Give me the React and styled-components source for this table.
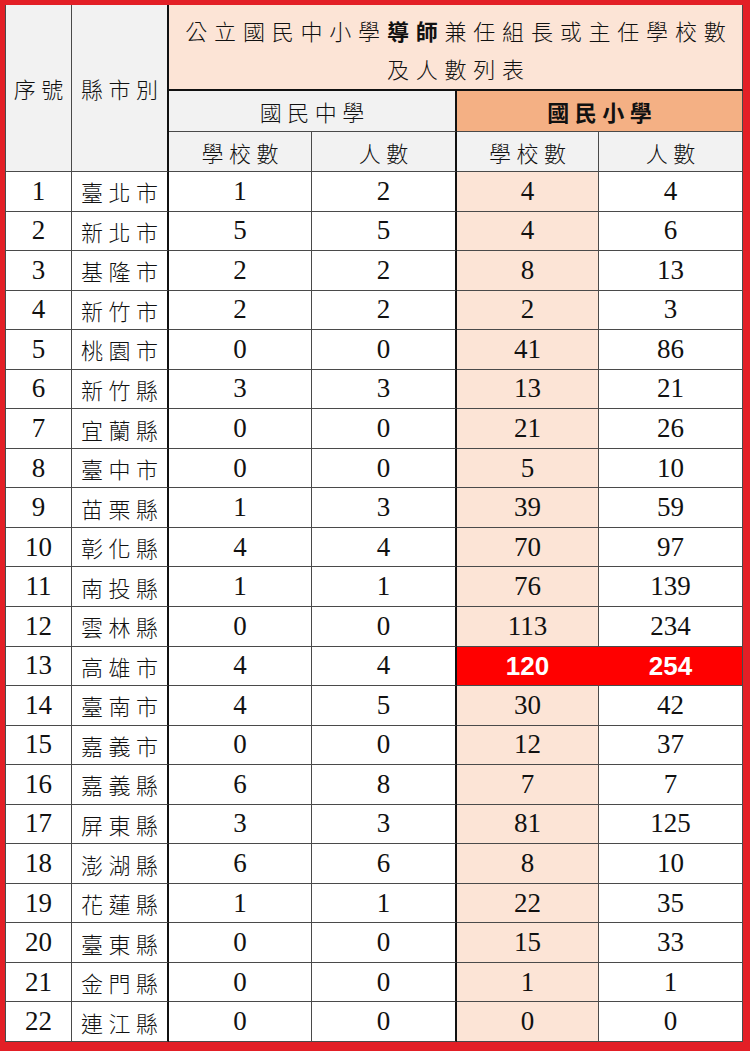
import React from 'react';
import styled, { createGlobalStyle, css } from 'styled-components';

const GlobalStyle = createGlobalStyle`
  html, body {
    margin: 0;
    padding: 0;
    background: #ffffff;
  }
  body {
    font-family: "Liberation Serif", "Noto Sans CJK TC", serif;
  }
`;

const Frame = styled.div`
  width: 750px;
  height: 1051px;
  box-sizing: border-box;
  border-style: solid;
  border-color: #e31f26;
  border-width: 5px 8px 9px 5px;
  background: #ffffff;
`;

const Grid = styled.div`
  display: grid;
  grid-template-columns: 66px 97px 143px 145px 142px 144px;
  grid-template-rows: 86px 41px 40px repeat(22, 1fr);
  height: 100%;
  box-sizing: border-box;
  border-left: 1px solid #4a4a4a;
`;

const Cell = styled.div`
  box-sizing: border-box;
  display: flex;
  align-items: center;
  justify-content: center;
  color: #111;
  background: ${(p) => p.$bg || '#ffffff'};
  border-right: ${(p) => (p.$thickRight ? '2px solid #111' : '1px solid #4a4a4a')};
  border-bottom: ${(p) => (p.$thickBottom ? '2px solid #111' : '1px solid #4a4a4a')};
  ${(p) => p.$col && css`grid-column: ${p.$col};`}
  ${(p) => p.$row && css`grid-row: ${p.$row};`}
`;

const HeadText = styled.span`
  font-family: "Noto Sans CJK TC", sans-serif;
  font-size: 22px;
  letter-spacing: 5.5px;
  padding-left: 5.5px;
  font-weight: ${(p) => (p.$bold ? 700 : 300)};
  line-height: 1;
`;

const Title = styled.div`
  font-family: "Noto Sans CJK TC", sans-serif;
  font-size: 22px;
  font-weight: 300;
  letter-spacing: 6.8px;
  padding-left: 6.8px;
  line-height: 38px;
  text-align: center;
  padding-top: 4px;

  b {
    font-weight: 700;
  }
`;

const Num = styled.span`
  font-family: "Liberation Serif", serif;
  font-size: 27px;
  line-height: 1;
`;

const City = styled.span`
  font-family: "Noto Sans CJK TC", sans-serif;
  font-size: 22px;
  font-weight: 300;
  letter-spacing: 5.5px;
  padding-left: 5.5px;
  line-height: 1;
`;

const HotCell = styled(Cell)`
  background: #ff0000;
  border-right-color: ${(p) => (p.$last ? '#4a4a4a' : '#ff0000')};
`;

const HotNum = styled.span`
  font-family: "Liberation Sans", Arial, sans-serif;
  font-weight: 700;
  font-size: 26px;
  color: #ffffff;
  line-height: 1;
`;

const GRAY = '#f2f2f2';
const PEACH = '#fce4d6';
const ORANGE = '#f4b084';

const rows = [
  ['臺北市', 1, 2, 4, 4],
  ['新北市', 5, 5, 4, 6],
  ['基隆市', 2, 2, 8, 13],
  ['新竹市', 2, 2, 2, 3],
  ['桃園市', 0, 0, 41, 86],
  ['新竹縣', 3, 3, 13, 21],
  ['宜蘭縣', 0, 0, 21, 26],
  ['臺中市', 0, 0, 5, 10],
  ['苗栗縣', 1, 3, 39, 59],
  ['彰化縣', 4, 4, 70, 97],
  ['南投縣', 1, 1, 76, 139],
  ['雲林縣', 0, 0, 113, 234],
  ['高雄市', 4, 4, 120, 254],
  ['臺南市', 4, 5, 30, 42],
  ['嘉義市', 0, 0, 12, 37],
  ['嘉義縣', 6, 8, 7, 7],
  ['屏東縣', 3, 3, 81, 125],
  ['澎湖縣', 6, 6, 8, 10],
  ['花蓮縣', 1, 1, 22, 35],
  ['臺東縣', 0, 0, 15, 33],
  ['金門縣', 0, 0, 1, 1],
  ['連江縣', 0, 0, 0, 0],
];

const HOT_ROW = 12;

const App = () => {
  return (
    <>
      <GlobalStyle />
      <Frame>
        <Grid>
          <Cell $col="1" $row="1 / span 3" $bg={GRAY}>
            <HeadText>序號</HeadText>
          </Cell>
          <Cell $col="2" $row="1 / span 3" $bg={GRAY} $thickRight>
            <HeadText>縣市別</HeadText>
          </Cell>
          <Cell $col="3 / span 4" $row="1" $bg={PEACH} $thickBottom>
            <Title>
              公立國民中小學<b>導師</b>兼任組長或主任學校數
              <br />
              及人數列表
            </Title>
          </Cell>
          <Cell $col="3 / span 2" $row="2" $bg={GRAY} $thickRight>
            <HeadText>國民中學</HeadText>
          </Cell>
          <Cell $col="5 / span 2" $row="2" $bg={ORANGE}>
            <HeadText $bold>國民小學</HeadText>
          </Cell>
          <Cell $bg={GRAY}>
            <HeadText>學校數</HeadText>
          </Cell>
          <Cell $bg={GRAY} $thickRight>
            <HeadText>人數</HeadText>
          </Cell>
          <Cell $bg={GRAY}>
            <HeadText>學校數</HeadText>
          </Cell>
          <Cell $bg={GRAY}>
            <HeadText>人數</HeadText>
          </Cell>

          {rows.map(([city, ms, mp, es, ep], i) => (
            <React.Fragment key={city}>
              <Cell>
                <Num>{i + 1}</Num>
              </Cell>
              <Cell $thickRight>
                <City>{city}</City>
              </Cell>
              <Cell>
                <Num>{ms}</Num>
              </Cell>
              <Cell $thickRight>
                <Num>{mp}</Num>
              </Cell>
              {i === HOT_ROW ? (
                <>
                  <HotCell>
                    <HotNum>{es}</HotNum>
                  </HotCell>
                  <HotCell $last>
                    <HotNum>{ep}</HotNum>
                  </HotCell>
                </>
              ) : (
                <>
                  <Cell $bg={PEACH}>
                    <Num>{es}</Num>
                  </Cell>
                  <Cell>
                    <Num>{ep}</Num>
                  </Cell>
                </>
              )}
            </React.Fragment>
          ))}
        </Grid>
      </Frame>
    </>
  );
};

export default App;
